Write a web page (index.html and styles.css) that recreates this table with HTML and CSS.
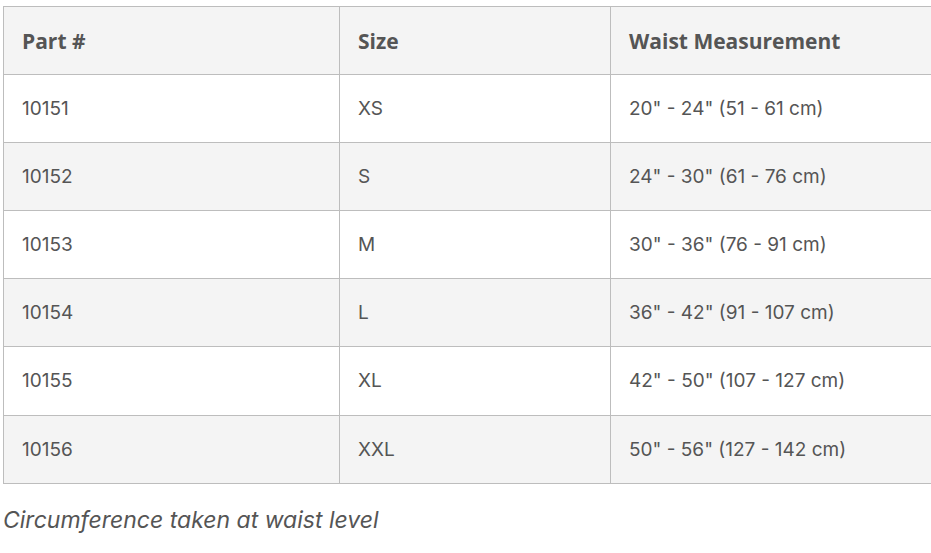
FILE: index.html
```html
<!DOCTYPE html>
<html>
<head>
<meta charset="utf-8">
<link rel="stylesheet" href="styles.css">
</head>
<body>
<div class="wrap">
<table class="sizes">
  <colgroup><col class="c1"><col class="c2"><col class="c3"></colgroup>
  <thead>
    <tr><th>Part #</th><th>Size</th><th>Waist Measurement</th></tr>
  </thead>
  <tbody>
    <tr><td>10151</td><td>XS</td><td>20" - 24" (51 - 61 cm)</td></tr>
    <tr><td>10152</td><td>S</td><td>24" - 30" (61 - 76 cm)</td></tr>
    <tr><td>10153</td><td>M</td><td>30" - 36" (76 - 91 cm)</td></tr>
    <tr><td>10154</td><td>L</td><td>36" - 42" (91 - 107 cm)</td></tr>
    <tr><td>10155</td><td>XL</td><td>42" - 50" (107 - 127 cm)</td></tr>
    <tr><td>10156</td><td>XXL</td><td>50" - 56" (127 - 142 cm)</td></tr>
  </tbody>
</table>
<p class="note">Circumference taken at waist level</p>
</div>
</body>
</html>
```
FILE: styles.css
```css
html, body { margin: 0; padding: 0; background: #fff; }
body { font-family: "Inter", "Noto Sans", sans-serif; color: #555; overflow: hidden; }
.wrap { padding: 6px 0 0 3px; width: 960px; }
.sizes { border-collapse: collapse; width: 950px; table-layout: fixed; }
.c1 { width: 336px; }
.c2 { width: 271px; }
.sizes th, .sizes td {
  border: 1px solid #bdbdbd;
  height: 68px;
  padding: 0 0 0 18px;
  text-align: left;
  vertical-align: middle;
  box-sizing: border-box;
}
.sizes thead th { height: 68px; }
.sizes tbody tr:nth-child(n+5) td { height: 68.5px; }
.sizes th { font-family: "Open Sans", sans-serif; font-weight: 700; font-size: 21px; color: #555; background: #f4f4f4; }
.sizes td { font-size: 19px; font-weight: 400; }
.sizes tbody tr:nth-child(even) td { background: #f4f4f4; }
.note { margin: 22px 0 0 0; font-style: italic; font-size: 23px; color: #555; }
```
